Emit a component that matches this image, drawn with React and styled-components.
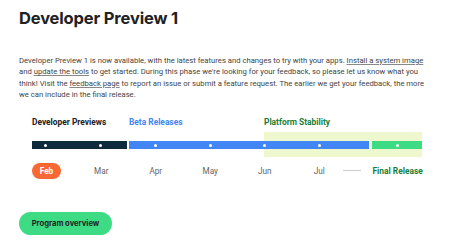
import React from "react";
import styled, { createGlobalStyle } from "styled-components";

const Global = createGlobalStyle`
  body {
    margin: 0;
    background: #fff;
    font-family: Roboto, "Liberation Sans", sans-serif;
  }
`;

const Page = styled.div`
  padding: 8px 19px 0 19px;
  width: 412px;
`;

const Title = styled.h1`
  margin: 0;
  font-family: Inter, "Open Sans", sans-serif;
  font-weight: 700;
  font-size: 16.5px;
  line-height: 20px;
  letter-spacing: -0.15px;
  color: #202124;
`;

const Text = styled.p`
  margin: 27px 0 0 0;
  font-size: 7.7px;
  line-height: 11.3px;
  color: #444;
`;

const Link = styled.a`
  color: #444;
  text-decoration: underline;
  text-decoration-color: #888;
  text-underline-offset: 1px;
`;

const Timeline = styled.div`
  margin: 16px 0 0 13px;
  display: grid;
  grid-template-columns: 95px 2px 135px 105px 3px 50px;
  grid-template-rows: 12px 5px 8px 8px 8px;
`;

const Label = styled.div`
  grid-row: 1;
  grid-column: ${(p) => p.$col};
  font-size: 8.4px;
  font-weight: 700;
  line-height: 12px;
  white-space: nowrap;
  color: ${(p) => p.$color};
`;

const Highlight = styled.div`
  grid-row: 2 / 6;
  grid-column: 4 / 7;
  margin-top: 4px;
  background: #eff7cf;
`;

const Segment = styled.div`
  grid-row: 4;
  grid-column: ${(p) => p.$col};
  background: ${(p) => p.$color};
  display: flex;
  align-items: center;
  justify-content: ${(p) => (p.$center ? "center" : "flex-start")};
  padding-left: ${(p) => p.$pad || 0}px;
  gap: 51.7px;
`;

const Dot = styled.span`
  width: 3px;
  height: 3px;
  border-radius: 50%;
  background: #fff;
  flex: none;
`;

const Months = styled.div`
  margin-top: 5px;
  display: flex;
  align-items: center;
  height: 17px;
  font-size: 8.2px;
`;

const Month = styled.div`
  width: 54.5px;
  flex: none;
  display: flex;
  justify-content: center;
  color: #5f6368;
`;

const Pill = styled.span`
  background: #f86734;
  color: #fff;
  font-weight: 700;
  border-radius: 9px;
  width: 29px;
  text-align: center;
  height: 16px;
  line-height: 16px;
  margin-left: 13px;
`;

const Dash = styled.span`
  width: 18px;
  height: 1px;
  background: #ccc;
  margin: 0 12px 0 -4px;
`;

const Final = styled.span`
  font-size: 8.4px;
  font-weight: 700;
  color: #188038;
  white-space: nowrap;
`;

const Button = styled.button`
  margin-top: 33px;
  width: 93px;
  height: 23px;
  border: none;
  border-radius: 12px;
  background: #3ddc84;
  color: #202124;
  font-family: Inter, "Open Sans", sans-serif;
  font-weight: 700;
  font-size: 7.6px;
  padding: 0;
`;

export default function App() {
  return (
    <Page>
      <Global />
      <Title>Developer Preview 1</Title>
      <Text>
        Developer Preview 1 is now available, with the latest features and
        changes to try with your apps. <Link>Install a system image</Link> and{" "}
        <Link>update the tools</Link> to get started. During this phase we're
        looking for your feedback, so please let us know what you think! Visit
        the <Link>feedback page</Link> to report an issue or submit a feature
        request. The earlier we get your feedback, the more we can include in
        the final release.
      </Text>
      <Timeline>
        <Label $col={1} $color="#202124">Developer Previews</Label>
        <Label $col={3} $color="#4285f4">Beta Releases</Label>
        <Label $col="4 / 7" $color="#188038">Platform Stability</Label>
        <Highlight />
        <Segment $col={1} $color="#0d2b3a" $pad={12}>
          <Dot />
          <Dot />
        </Segment>
        <Segment $col="3 / 5" $color="#4285f4" $pad={25}>
          <Dot />
          <Dot />
          <Dot />
          <Dot />
        </Segment>
        <Segment $col={6} $color="#3ddc84" $center>
          <Dot />
        </Segment>
      </Timeline>
      <Months>
        <Pill>Feb</Pill>
        <Month style={{ marginLeft: 13 }}>Mar</Month>
        <Month>Apr</Month>
        <Month>May</Month>
        <Month>Jun</Month>
        <Month>Jul</Month>
        <Dash />
        <Final>Final Release</Final>
      </Months>
      <Button>Program overview</Button>
    </Page>
  );
}
